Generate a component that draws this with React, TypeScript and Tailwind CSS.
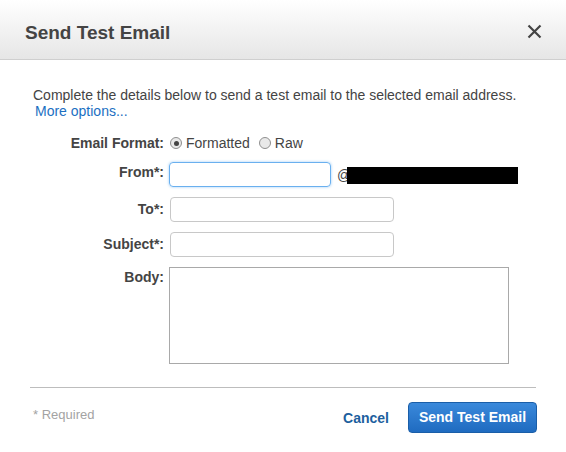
export default function App() {
  const font = { fontFamily: '"Liberation Sans", Arial, sans-serif' }

  return (
    <div className="w-[566px] h-[452px] bg-white text-[#444]" style={font}>
      {/* Header */}
      <div className="h-[60px] flex items-center justify-between pl-[25px] pr-[24px] border-b border-[#cfcfcf] bg-gradient-to-b from-white to-[#e6e6e6]">
        <h2 className="text-[19px] font-bold text-[#444] leading-none mt-[5px]">Send Test Email</h2>
        <svg width="15" height="15" viewBox="0 0 15 15" className="mt-[4px]">
          <path d="M1.5 1.5 L13.5 13.5 M13.5 1.5 L1.5 13.5" stroke="#444" strokeWidth="2.2" />
        </svg>
      </div>

      {/* Body */}
      <div className="px-[30px] pt-[27px]">
        <p className="text-[14px] leading-[16px] pl-[3px] text-[#444]">
          Complete the details below to send a test email to the selected email address.
          <br />
          <span className="text-[#1b6fc2] pl-[2px]">More options...</span>
        </p>

        <div className="mt-[16px] flex flex-col">
          {/* Email format */}
          <div className="flex items-center h-[16px]">
            <div className="w-[134px] text-right font-bold text-[14px]">Email Format:</div>
            <div className="flex items-center ml-[6px] text-[14px]">
              <span className="w-[12px] h-[12px] rounded-full border border-[#8f8f8f] bg-[#e9e9e9] flex items-center justify-center">
                <span className="w-[5px] h-[5px] rounded-full bg-[#444]" />
              </span>
              <span className="ml-[4px]">Formatted</span>
              <span className="ml-[9px] w-[12px] h-[12px] rounded-full border border-[#8f8f8f] bg-[#e9e9e9]" />
              <span className="ml-[4px]">Raw</span>
            </div>
          </div>

          {/* From */}
          <div className="flex mt-[11px]">
            <div className="w-[134px] text-right font-bold text-[14px]">From*:</div>
            <div className="ml-[5px] w-[162px] h-[25px] rounded-[4px] border border-[#6ab0ef] shadow-[0_0_3px_#9fcdf6]" />
            <div className="ml-[6px] mt-[5px] flex items-start">
              <span className="text-[14px] leading-[16px]">@</span>
              <span className="-ml-[4px] w-[171px] h-[17px] bg-black" />
            </div>
          </div>

          {/* To */}
          <div className="flex mt-[10px]">
            <div className="w-[134px] text-right font-bold text-[14px] pt-[2px]">To*:</div>
            <div className="ml-[6px] w-[224px] h-[25px] rounded-[4px] border border-[#c8c8c8]" />
          </div>

          {/* Subject */}
          <div className="flex mt-[10px]">
            <div className="w-[134px] text-right font-bold text-[14px] pt-[2px]">Subject*:</div>
            <div className="ml-[6px] w-[224px] h-[25px] rounded-[4px] border border-[#c8c8c8]" />
          </div>

          {/* Body */}
          <div className="flex mt-[10px]">
            <div className="w-[134px] text-right font-bold text-[14px]">Body:</div>
            <div className="ml-[5px] w-[340px] h-[97px] border border-[#a9a9a9]" />
          </div>
        </div>

        <div className="mt-[23px] border-t border-[#bdbdbd] w-[506px]" />

        {/* Footer */}
        <div className="flex items-center justify-between mt-[14px] w-[507px]">
          <span className="text-[13px] text-[#a3a3a3] pl-[3px] -mt-[6px]">* Required</span>
          <div className="flex items-center">
            <span className="text-[14px] font-bold text-[#1d5f9e] mr-[19px] mt-[2px]">Cancel</span>
            <button className="w-[129px] h-[31px] rounded-[4px] border border-[#1a5ea8] bg-gradient-to-b from-[#3a89db] to-[#1f6bc0] text-white font-bold text-[14px]">
              Send Test Email
            </button>
          </div>
        </div>
      </div>
    </div>
  )
}
